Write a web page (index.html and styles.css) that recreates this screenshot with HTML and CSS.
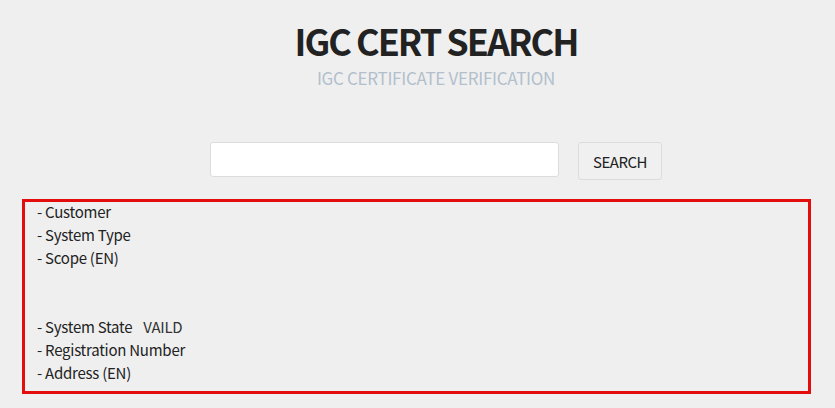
FILE: index.html
```html
<!DOCTYPE html>
<html>
<head>
<meta charset="utf-8">
<link rel="stylesheet" href="styles.css">
</head>
<body>
<div class="page">
  <header class="head">
    <h1 class="title">IGC CERT SEARCH</h1>
    <p class="subtitle">IGC CERTIFICATE VERIFICATION</p>
  </header>
  <form class="search">
    <input class="search-input" type="text">
    <button class="search-btn" type="button">SEARCH</button>
  </form>
  <section class="result">
    <div class="row">- Customer</div>
    <div class="row">- System Type</div>
    <div class="row row-scope">- Scope (EN)</div>
    <div class="row">- System State<span class="value">VAILD</span></div>
    <div class="row">- Registration Number</div>
    <div class="row">- Address (EN)</div>
  </section>
</div>
</body>
</html>
```

FILE: styles.css
```css
html, body {
  margin: 0;
  padding: 0;
  background: #efefef;
}
body {
  font-family: "Noto Sans CJK KR", "Noto Sans", sans-serif;
  color: #222;
}
.page {
  width: 835px;
}
.head {
  padding-left: 37px;
  text-align: center;
}
.title {
  margin: 14px 0 0;
  font-size: 36px;
  line-height: 52px;
  font-weight: 700;
  color: #222;
  letter-spacing: -2px;
}
.subtitle {
  margin: 0;
  font-size: 17px;
  line-height: 24px;
  color: #b2bfcc;
  letter-spacing: -0.3px;
}
.search {
  margin: 52px 0 0;
  padding-left: 37px;
  display: flex;
  justify-content: center;
  align-items: flex-start;
  gap: 19px;
}
.search-input {
  box-sizing: border-box;
  width: 349px;
  height: 35px;
  margin: 0;
  border: 1px solid #dcdcdc;
  border-radius: 3px;
  background: #fff;
  outline: none;
}
.search-btn {
  box-sizing: border-box;
  width: 84px;
  height: 38px;
  margin: 0;
  border: 1px solid #dcdcdc;
  border-radius: 3px;
  background: #f0f0f0;
  font-family: "Noto Sans CJK KR", "Noto Sans", sans-serif;
  font-size: 15px;
  letter-spacing: -0.5px;
  color: #222;
}
.result {
  box-sizing: border-box;
  margin: 19px 0 0 22px;
  width: 789px;
  height: 195px;
  border: 3px solid #e30d0d;
  padding: 0 0 0 12px;
  font-size: 15px;
  line-height: 23px;
  letter-spacing: -0.25px;
}
.row {
  height: 23px;
}
.row:first-child {
  margin-top: -2px;
}
.row-scope {
  height: 69px;
}
.value {
  margin-left: 11px;
  color: #333;
}
```
